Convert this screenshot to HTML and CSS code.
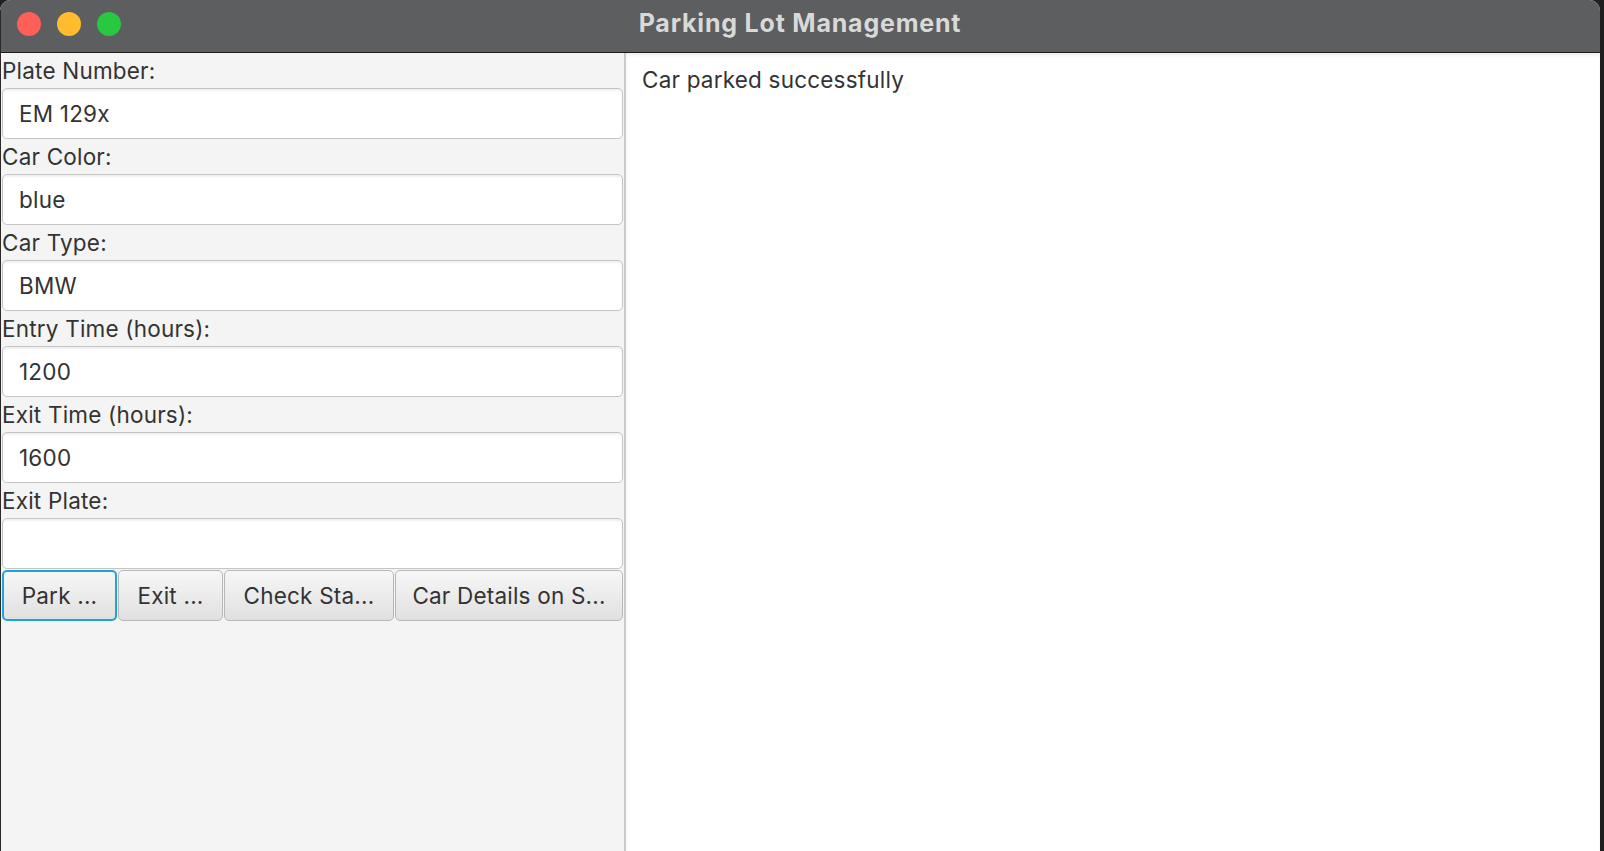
FILE: index.html
```html
<!DOCTYPE html>
<html>
<head>
<meta charset="utf-8">
<title>Parking Lot Management</title>
<link rel="stylesheet" href="styles.css">
</head>
<body>
<div class="window">
  <div class="titlebar">
    <div class="lights">
      <span class="light red"></span>
      <span class="light yellow"></span>
      <span class="light green"></span>
    </div>
    <div class="title">Parking Lot Management</div>
  </div>
  <div class="content">
    <div class="form">
      <div class="label">Plate Number:</div>
      <div class="field">EM 129x</div>
      <div class="label">Car Color:</div>
      <div class="field">blue</div>
      <div class="label">Car Type:</div>
      <div class="field">BMW</div>
      <div class="label">Entry Time (hours):</div>
      <div class="field">1200</div>
      <div class="label">Exit Time (hours):</div>
      <div class="field">1600</div>
      <div class="label">Exit Plate:</div>
      <div class="field"></div>
      <div class="buttons">
        <div class="btn btn-park focused">Park ...</div>
        <div class="btn btn-exit">Exit ...</div>
        <div class="btn btn-check">Check Sta...</div>
        <div class="btn btn-details">Car Details on S...</div>
      </div>
    </div>
    <div class="output">Car parked successfully</div>
  </div>
</div>
</body>
</html>
```
FILE: styles.css
```css
html, body {
  margin: 0;
  padding: 0;
  background: #1f1f1f;
  overflow: hidden;
}
body {
  width: 1604px;
  height: 851px;
  font-family: Inter, "Noto Sans", sans-serif;
}
.window {
  width: 1600px;
  height: 870px;
  display: flex;
  flex-direction: column;
  border-radius: 11px 11px 0 0;
  overflow: hidden;
  background: #f4f4f4;
  position: relative;
}
.window::after {
  content: "";
  position: absolute;
  left: 0;
  top: 10px;
  bottom: 0;
  width: 1px;
  background: #2a2a2a;
}
.titlebar {
  box-sizing: border-box;
  height: 53px;
  flex: 0 0 53px;
  background: #5d5e60;
  border-bottom: 1px solid #1d1d1d;
  display: flex;
  align-items: center;
  position: relative;
}
.lights {
  display: flex;
  gap: 16px;
  padding-left: 17px;
  margin-top: -4px;
}
.light {
  width: 24px;
  height: 24px;
  border-radius: 50%;
  display: block;
}
.red { background: #fe5f57; }
.yellow { background: #febc2e; }
.green { background: #28c840; }
.title {
  position: absolute;
  left: 0;
  right: 0;
  top: 0;
  height: 47px;
  line-height: 47px;
  text-align: center;
  color: #d9d9d9;
  font-weight: 700;
  font-size: 25px;
  letter-spacing: 0.8px;
}
.content {
  flex: 1;
  display: flex;
}
.form {
  width: 626px;
  flex: 0 0 626px;
  padding-left: 2px;
  padding-right: 1px;
  box-sizing: border-box;
  background: #f4f4f4;
  border-right: 2px solid #c9c9c9;
  display: flex;
  flex-direction: column;
  color: #333;
  font-size: 22.5px;
  letter-spacing: 0.2px;
}
.label {
  height: 35px;
  line-height: 35px;
}
.field {
  height: 51px;
  box-sizing: border-box;
  background: #fff;
  border: 1px solid #c4c4c4;
  border-radius: 5px;
  box-shadow: inset 0 2px 2px rgba(0,0,0,0.06);
  padding-left: 16px;
  line-height: 49px;
}
.buttons {
  display: flex;
  gap: 1px;
  margin-top: 1px;
}
.btn {
  height: 51px;
  box-sizing: border-box;
  border: 1px solid #b8b8b8;
  border-radius: 5px;
  background: linear-gradient(#f7f7f7, #e0e0e0);
  text-align: center;
  line-height: 49px;
  white-space: nowrap;
  overflow: hidden;
}
.btn-park { width: 115px; }
.btn-exit { width: 105px; }
.btn-check { width: 170px; }
.btn-details { width: 228px; }
.focused {
  border: 2px solid #1fa4d6;
  line-height: 47px;
}
.output {
  flex: 1;
  background: #fff;
  color: #333;
  font-size: 22.5px;
  letter-spacing: 0.2px;
  padding: 13px 16px;
  box-shadow: inset 0 3px 3px rgba(0,0,0,0.05);
}
```
